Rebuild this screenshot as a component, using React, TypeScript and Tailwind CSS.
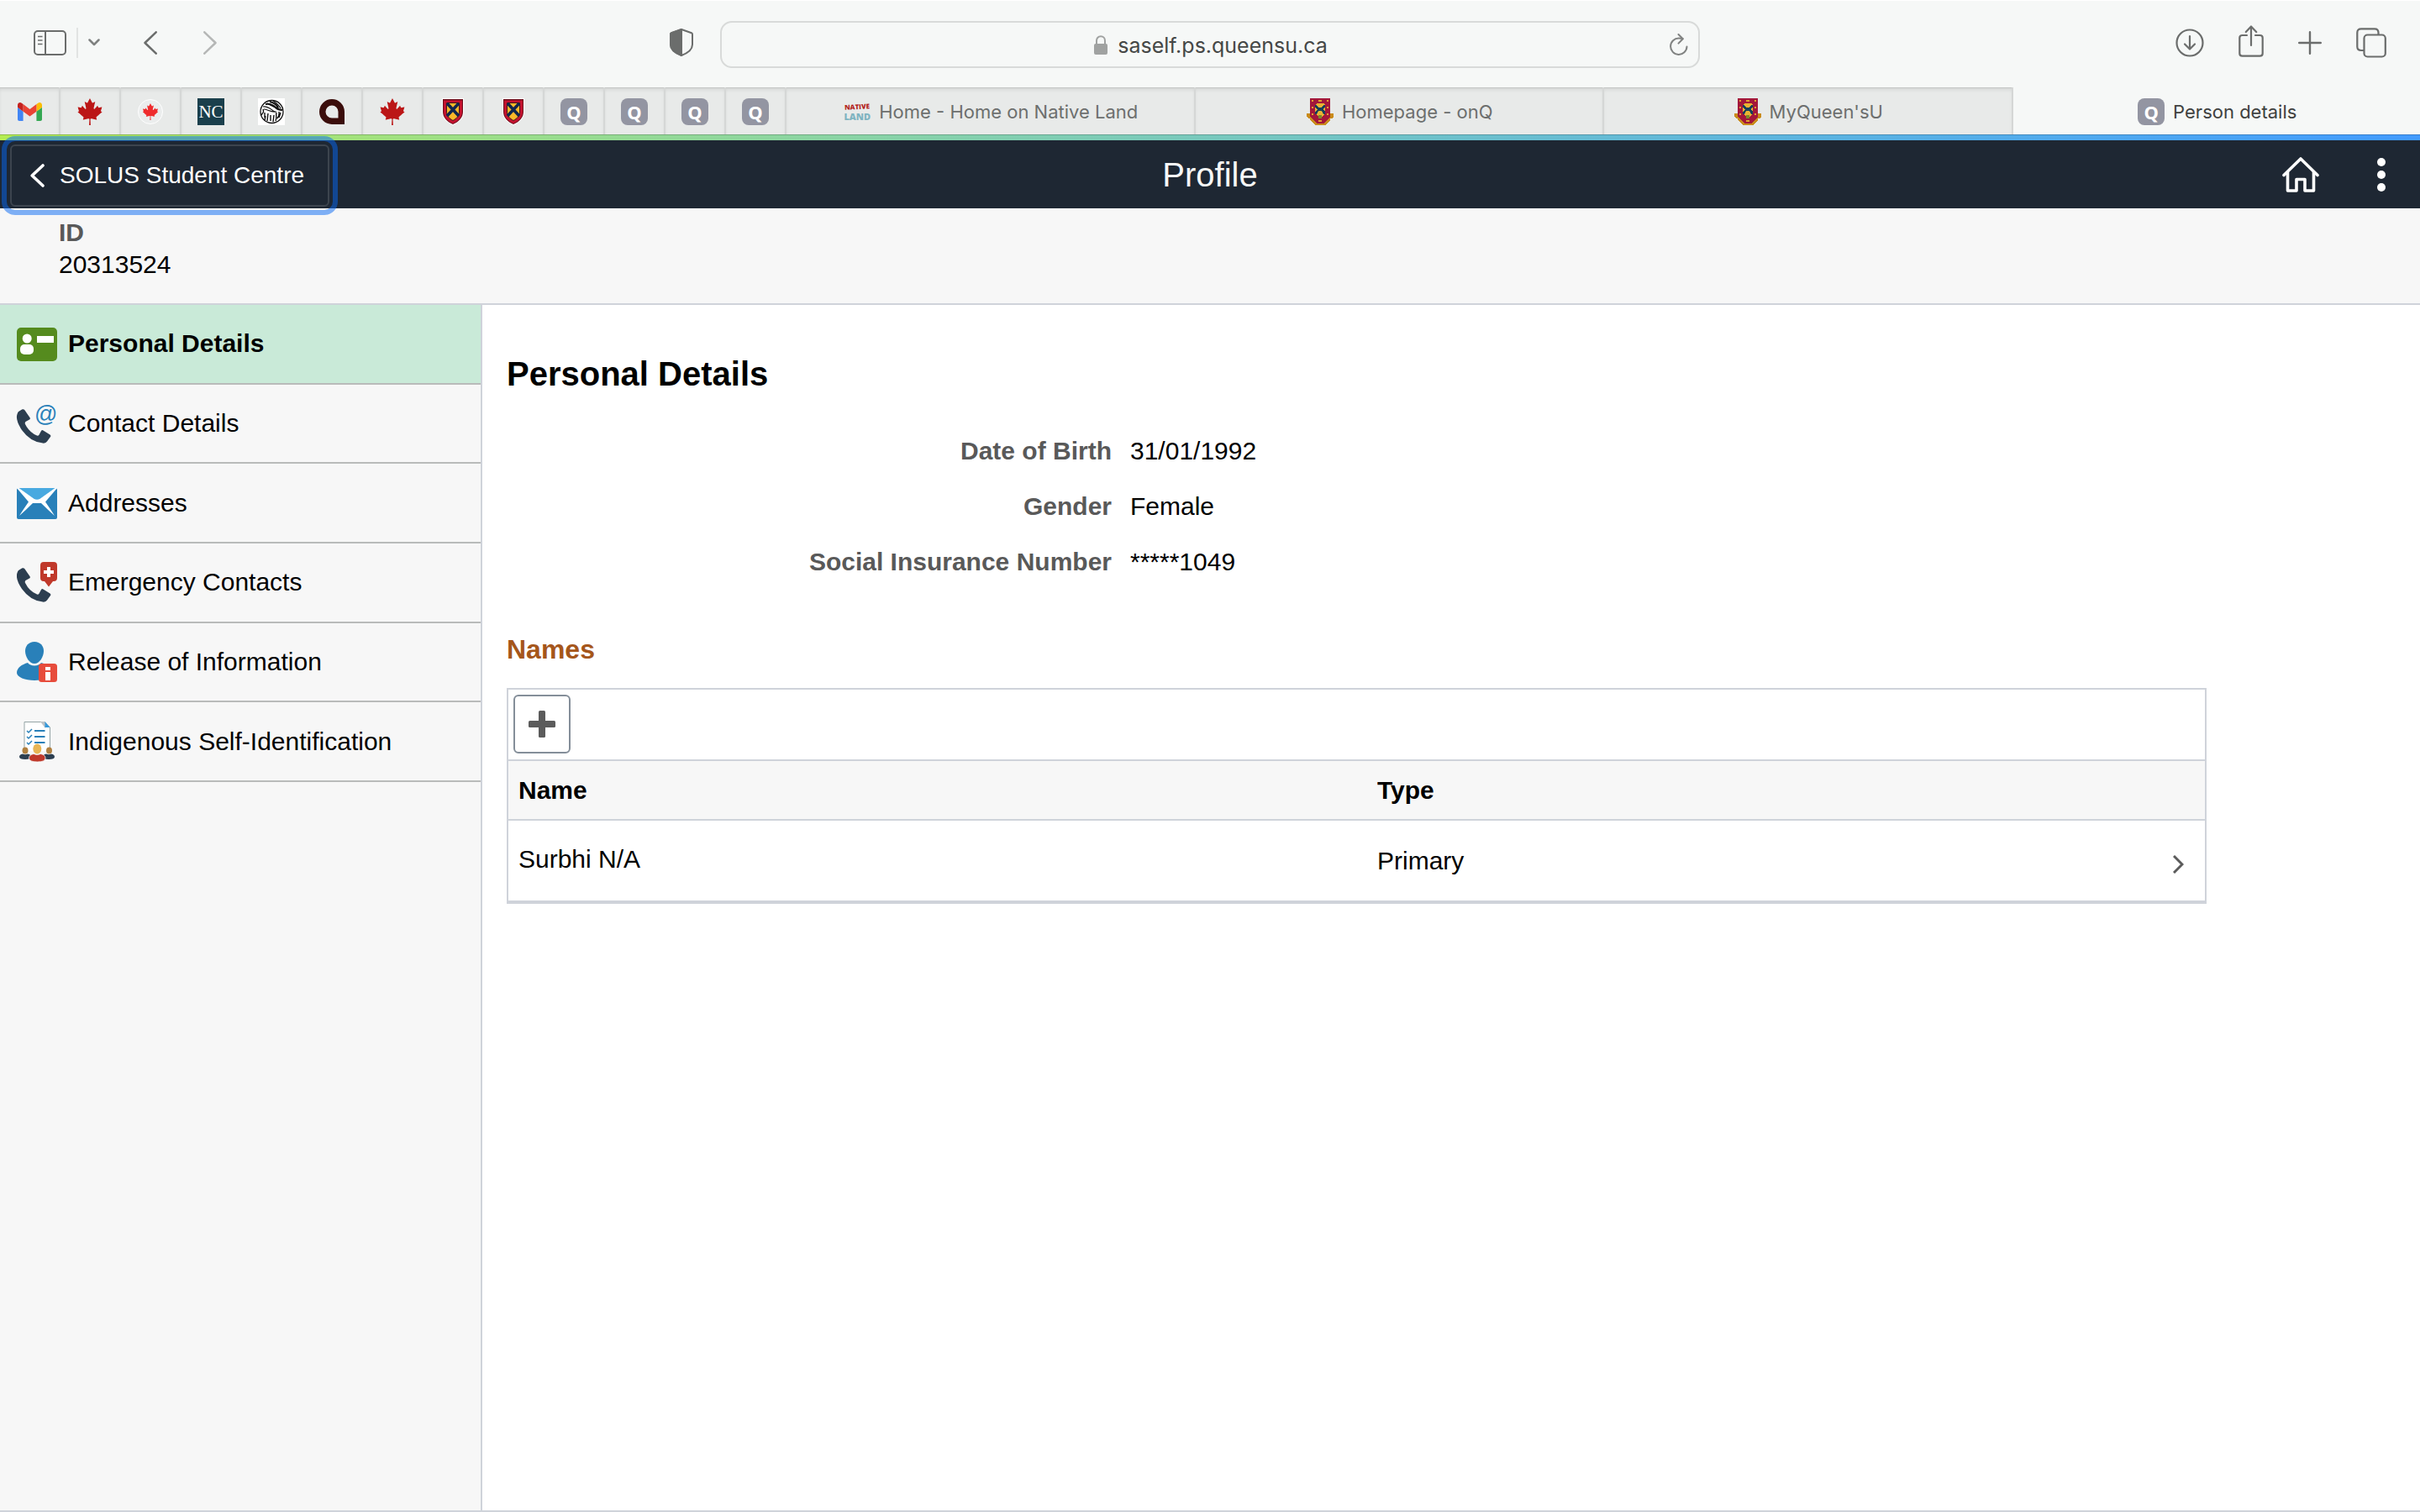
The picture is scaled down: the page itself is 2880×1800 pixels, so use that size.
import type { ReactNode } from "react";
import { FaCanadianMapleLeaf } from "react-icons/fa";

/* ---------- favicons ---------- */

function Gmail() {
  return (
    <svg viewBox="52 42 88 66" className="h-[22px] w-[29px]">
      <path fill="#4285f4" d="M58 108h14V74L52 59v43c0 3.32 2.69 6 6 6" />
      <path fill="#34a853" d="M120 108h14c3.32 0 6-2.69 6-6V59l-20 15" />
      <path fill="#fbbc04" d="M120 48v26l20-15v-8c0-7.42-8.47-11.65-14.4-7.2" />
      <path fill="#ea4335" d="M72 74V48l24 18 24-18v26L96 92" />
      <path fill="#c5221f" d="M52 51v8l20 15V48l-5.6-4.2c-5.94-4.45-14.4-.22-14.4 7.2" />
    </svg>
  );
}

function Leaf() {
  return <FaCanadianMapleLeaf className="size-8 text-[#bb1616]" />;
}

function RoundLeaf() {
  return (
    <span className="flex size-[30px] items-center justify-center rounded-full border border-white bg-[#ebeded]">
      <FaCanadianMapleLeaf className="size-5 text-[#ef2b2d]" />
    </span>
  );
}

function NcMark() {
  return (
    <span className="flex size-8 items-center justify-center bg-[#1a3f4c] font-['Liberation_Serif'] text-[21px] leading-8 text-white">
      NC
    </span>
  );
}

function Sketch() {
  return (
    <svg viewBox="0 0 32 32" className="size-8 bg-white" fill="none" stroke="#111">
      <circle cx="16.500" cy="16" r="13.500" strokeWidth="1.300" />
      <path strokeWidth="2.200" d="M9 7c5-1 9 1 12 4 2 2 5 3 8 3M14 4c4 1 8 3 10 7" />
      <path strokeWidth="1.200" d="M6 10c6-1 9 3 14 6M7 13c4 0 8 4 15 3M11 6c4 2 7 5 14 6M18 3c4 3 7 5 9 9" />
      <path strokeWidth="1.400" d="M4 20c3-4 3-4 2-7M8 17v6M8 26l1-5M12 18l-1 9M15 20v7M19 20l-1 8M22 17c-1 3 1 6-1 10M25 16c0 3 1 4-2 8M27 17l-2 6" />
    </svg>
  );
}

function DropMark() {
  return (
    <svg viewBox="0 0 30 30" className="size-[30px]">
      <path
        fill="#3b0d0b"
        fillRule="evenodd"
        d="M15 0a15 15 0 0 1 15 15v15H15A15 15 0 0 1 15 0zm0 7.500a7.500 7.500 0 0 0 0 15h7.500V15A7.500 7.500 0 0 0 15 7.500z"
      />
    </svg>
  );
}

function Shield() {
  return (
    <svg viewBox="0 0 26 32" className="h-8 w-[26px]">
      <path fill="#fff" d="M0 0h26v16c0 8-6 13-13 16C6 29 0 24 0 16z" />
      <path fill="#6d0f1c" d="M1 1h24v15c0 7-5 12-12 15C6 28 1 23 1 16z" />
      <path fill="#c4122f" d="M2 2.500h22V16c0 6-4 11-11 14C6 27 2 22 2 16z" />
      <path fill="#fbb829" stroke="#3a1a1a" strokeWidth="1" d="M5.500 5.500h15V16c0 5-3 8-7.500 10.500C8.500 24 5.500 21 5.500 16z" />
      <path stroke="#10264c" strokeWidth="3.600" d="M6 6l14 15M20 6L6 21" />
    </svg>
  );
}

function Crest() {
  return (
    <svg viewBox="0 0 32 32" className="size-8" shapeRendering="crispEdges">
      <path fill="#c98b1b" d="M0 18h4v2h24v-2h4v4l-2 2h-2v2l-2 2-2 2-2 2H10l-2-2-2-2-2-2v-2H2l-2-2z" />
      <path fill="#a3173a" d="M4 0h24v22l-2 2-4 4-2 2h-8l-2-2-4-4-2-2z" />
      <path fill="#e9b233" d="M12 6h8l2 2v10l-2 2-2 2h-4l-2-2-2-2V8z" />
      <path fill="#17405a" d="M10 8h2l2 3h4l2-3h2v3l-3 2 3 3v3h-2l-2-4h-4l-2 4h-2v-3l3-3-3-2z" />
      <path fill="#7d8a2a" d="M14 20h4v4h-4z" />
      <path fill="#e0a030" d="M6 2h2v2H6zM14 2h4v2h-4zM24 2h2v2h-2zM6 10h2v2H6zM24 10h2v2h-2zM6 18h2v2H6zM24 18h2v2h-2zM14 26h4v2h-4z" />
    </svg>
  );
}

function QMark() {
  return (
    <span className="flex size-8 items-center justify-center rounded-lg bg-[#9395a2] font-['Noto_Sans'] text-[22px] leading-8 font-bold text-white">
      Q
    </span>
  );
}

function NativeLand() {
  return (
    <span className="flex w-8 flex-col items-center justify-center font-['Open_Sans'] font-extrabold">
      <span className="-rotate-3 text-[8px] leading-3 text-[#b3231c]">NATIVE</span>
      <span className="text-[11px] leading-3 text-[#7fb4c1]">LAND</span>
    </span>
  );
}

/* ---------- side menu icons ---------- */

const phonePath =
  "M2 10L6.500 7.300Q8.500 6.800 9.600 8.500L15.600 17.200Q16.400 18.700 15 19.600L10.500 22Q9.300 23 10 25Q15 35 24 38.500Q25.500 39 26.300 38L29 33Q30 31.500 31.500 32.500L39.500 37.500Q41 38.500 40 40L36 45.500Q34.500 48 31 47.600Q16 46 6 32Q-2 20 .500 13Q1 11 2 10Z";

function CardIcon() {
  return (
    <svg viewBox="0 0 48 48" className="size-12 shrink-0">
      <rect y="5" width="48" height="40" rx="5" fill="#558b1e" />
      <ellipse cx="12.200" cy="18" rx="5.500" ry="5.500" fill="#fff" />
      <rect x="4" y="25" width="16" height="12" rx="5" fill="#fff" />
      <rect x="24" y="15" width="20" height="8" fill="#fff" />
    </svg>
  );
}

function PhoneAtIcon() {
  return (
    <svg viewBox="0 0 48 48" className="size-12 shrink-0 overflow-visible">
      <path fill="#2c3e50" d={phonePath} />
      <text x="21" y="22" fontSize="27" fill="#2980b9" fontFamily="Liberation Sans, sans-serif">
        @
      </text>
    </svg>
  );
}

function MailIcon() {
  return (
    <svg viewBox="0 0 48 48" className="size-12 shrink-0">
      <rect y="6" width="48" height="37" rx="2" fill="#2980b9" />
      <path fill="#fff" d="M0 6h48L34 22.500Q40 31 45 39Q37 32 29 24H19Q11 32 3 39Q8 31 14 22.500Z" />
      <path fill="#48a9e0" d="M2.500 6h43L28 18.500Q24 21 20 18.500Z" />
    </svg>
  );
}

function PhoneAidIcon() {
  return (
    <svg viewBox="0 0 48 48" className="size-12 shrink-0">
      <path fill="#2c3e50" d={phonePath} />
      <path fill="#c0392b" d="M32 0h12q4 0 4 4v15q0 4-4 4h-1l-5 6.500-5-6.500h-1q-4 0-4-4V4q0-4 4-4z" />
      <path fill="#fff" d="M36 6h4v4h4v4h-4v4h-4v-4h-4v-4h4z" />
    </svg>
  );
}

function PersonInfoIcon() {
  return (
    <svg viewBox="0 0 48 48" className="size-12 shrink-0">
      <path fill="#2980b9" d="M21 0c7 0 11 5 11 11 0 7-5 15-11 15S10 18 10 11C10 5 14 0 21 0z" />
      <path fill="#2980b9" d="M13 25c3 4.500 13 4.500 16 0 7 2 12 6 12 12 0 5-9 9-20 9S0 42 0 37c0-6 6-10 13-12z" />
      <rect x="26" y="26" width="22" height="22" rx="3.500" fill="#e74c3c" />
      <path fill="#fff" d="M34 30h6v4h-6zM34 36h6v10h-6z" />
    </svg>
  );
}

function ChecklistPeopleIcon() {
  return (
    <svg viewBox="0 0 48 48" className="size-12 shrink-0">
      <path fill="#fff" stroke="#95a5a6" strokeWidth="1" d="M9 35V.500h24L39.500 7v28" />
      <path fill="#bdc3c7" d="M28 0h6v8z" />
      <path fill="#3498db" d="M33.500 0l6 7h-6z" />
      <g fill="none" stroke="#2980b9" strokeWidth="2">
        <path d="M21 11h12.500M21 18h12.500M21 25h12.500" />
        <path d="M12 11l2 2 4-4M12 18l2 2 4-4M12 25l2 2 4-4" strokeWidth="1.500" />
      </g>
      <ellipse cx="10" cy="34.500" rx="3.500" ry="4" fill="#b08040" />
      <ellipse cx="38.500" cy="34.500" rx="3.500" ry="4" fill="#b08040" />
      <path fill="#2c3e50" d="M3 42q0-3 4-3.500 3 1.500 6 0 4 .500 4 3.500 0 3-7 3-7 0-7-3zM31 42q0-3 4-3.500 3 1.500 6 0 4 .500 4 3.500 0 3-7 3-7 0-7-3z" />
      <path fill="#c0392b" stroke="#f7f7f7" strokeWidth=".8" d="M14.500 43.500q0-4 5.500-5 4 2 8.500 0 5.500 1 5.500 5 0 4.500-9.700 4.500t-9.800-4.500z" />
      <ellipse cx="24.300" cy="32.500" rx="5" ry="6" fill="#e8b555" />
    </svg>
  );
}

/* ---------- browser chrome ---------- */

function ToolButton({ label, children }: { label: string; children: ReactNode }) {
  return (
    <button type="button" aria-label={label} className="flex shrink-0 items-center justify-center">
      {children}
    </button>
  );
}

function Toolbar() {
  return (
    <header className="flex h-26 items-center border-t border-white bg-[#f6f8f7] px-10 pb-1 text-[#6b6d6c]">
      <div className="flex flex-1 items-center pr-8">
        <ToolButton label="Show sidebar">
          <svg viewBox="0 0 39 30" className="h-[30px] w-[39px]" fill="none" stroke="currentColor" strokeWidth="2">
            <rect x="1" y="1" width="37" height="28" rx="4" />
            <path d="M14 1v28" />
            <path d="M5 7.500h5.500M5 12h5.500M5 16.500h5.500" strokeWidth="1.500" />
          </svg>
        </ToolButton>
        <span className="ml-3 h-9 w-[2px] bg-[#e2e4e3]" />
        <div className="ml-3 flex">
          <ToolButton label="Tab groups">
            <svg viewBox="0 0 14 9" className="h-[9px] w-[14px]" fill="none" stroke="#7f8180" strokeWidth="2.500" strokeLinecap="round" strokeLinejoin="round">
              <path d="M1.500 1.500L7 7l5.500-5.500" />
            </svg>
          </ToolButton>
        </div>
        <div className="ml-13 flex gap-[55px]">
          <ToolButton label="Back">
            <svg viewBox="0 0 16 28" className="h-7 w-4" fill="none" stroke="currentColor" strokeWidth="2.500" strokeLinecap="round" strokeLinejoin="round">
              <path d="M14.700 1.300L1.500 14l13.200 12.700" />
            </svg>
          </ToolButton>
          <ToolButton label="Forward">
            <svg viewBox="0 0 16 28" className="h-7 w-4" fill="none" stroke="#b5b7b6" strokeWidth="2.500" strokeLinecap="round" strokeLinejoin="round">
              <path d="M1.300 1.300L14.500 14 1.300 26.700" />
            </svg>
          </ToolButton>
        </div>
        <div className="ml-auto flex">
          <ToolButton label="Privacy report">
            <svg viewBox="0 0 28 33" className="h-[33px] w-7" fill="none" stroke="currentColor" strokeWidth="2" strokeLinejoin="round">
              <path d="M14 1l12 4.300q1 .400 1 1.500V19c0 6-5 10-13 13C6 29 1 25 1 19V6.800Q1 5.700 2 5.300z" />
              <path fill="currentColor" d="M14 1v31C6 29 1 25 1 19V6.800Q1 5.700 2 5.300z" />
            </svg>
          </ToolButton>
        </div>
      </div>
      <div className="mt-1 flex h-14 w-[1166px] items-center rounded-[14px] border-2 border-[#d8dad9] pr-3">
        <div className="flex flex-1 items-center justify-center gap-3 pt-[2px] pl-9">
          <svg viewBox="0 0 16 23" className="h-[23px] w-4" fill="none" stroke="#a0a2a1" strokeWidth="2">
            <path d="M3 11V6.500C3 3.500 5 1.300 8 1.300s5 2.200 5 5.200V11" />
            <rect y="10" width="16" height="13" rx="2" fill="#a0a2a1" stroke="none" />
          </svg>
          <input
            aria-label="Address"
            defaultValue="saself.ps.queensu.ca"
            className="field-sizing-content bg-transparent text-[25px] leading-8 text-[#454746] outline-none"
          />
        </div>
        <ToolButton label="Reload page">
          <svg viewBox="0 0 22 26" className="h-[26px] w-[22px]" fill="none" stroke="#808281" strokeWidth="2" strokeLinecap="round" strokeLinejoin="round">
            <path d="M20.500 15.500A9.700 9.700 0 1 1 11 5.500c1.800 0 3 .2 4.500.6" />
            <path d="M10.500 1l5.300 5.300-5.300 5.300" />
          </svg>
        </ToolButton>
      </div>
      <div className="flex flex-1 items-center justify-end gap-[41px] pl-8">
        <ToolButton label="Downloads">
          <svg viewBox="0 0 34 34" className="size-[34px]" fill="none" stroke="currentColor" strokeWidth="2.200" strokeLinecap="round" strokeLinejoin="round">
            <circle cx="17" cy="17" r="15.500" />
            <path d="M17 9v15M11 18.500l6 6 6-6" />
          </svg>
        </ToolButton>
        <ToolButton label="Share">
          <svg viewBox="0 0 30 38" className="mb-1 h-[38px] w-[30px]" fill="none" stroke="currentColor" strokeWidth="2.200" strokeLinecap="round" strokeLinejoin="round">
            <path d="M10 12H4.500Q1.300 12 1.300 15v18.500q0 3.200 3.200 3.200h21q3.200 0 3.200-3.200V15q0-3-3.200-3H20" />
            <path d="M15 24V2M8.800 8L15 1.500 21.200 8" />
          </svg>
        </ToolButton>
        <ToolButton label="New tab">
          <svg viewBox="0 0 28 28" className="size-7" fill="none" stroke="currentColor" strokeWidth="2.400" strokeLinecap="round">
            <path d="M14 1.200v25.600M1.200 14h25.600" />
          </svg>
        </ToolButton>
        <ToolButton label="Tab overview">
          <svg viewBox="0 0 36 36" className="size-9" fill="none" stroke="currentColor" strokeWidth="2.200">
            <rect x="9.500" y="8.500" width="25.300" height="26" rx="4" />
            <path d="M9.500 27H6q-4.700 0-4.700-4.500V6Q1.300 1.300 6 1.300h16q4.500 0 4.500 4.500v2.500" />
          </svg>
        </ToolButton>
      </div>
    </header>
  );
}

const pins: { name: string; icon: ReactNode }[] = [
  { name: "Gmail", icon: <Gmail /> },
  { name: "Canada", icon: <Leaf /> },
  { name: "Immigration", icon: <RoundLeaf /> },
  { name: "NC", icon: <NcMark /> },
  { name: "Archive", icon: <Sketch /> },
  { name: "Workspace", icon: <DropMark /> },
  { name: "Canada services", icon: <Leaf /> },
  { name: "University", icon: <Shield /> },
  { name: "Graduate studies", icon: <Shield /> },
  { name: "Pinned 1", icon: <QMark /> },
  { name: "Pinned 2", icon: <QMark /> },
  { name: "Pinned 3", icon: <QMark /> },
  { name: "Pinned 4", icon: <QMark /> },
];

const tabs: { title: string; icon: ReactNode; active?: boolean }[] = [
  { title: "Home - Home on Native Land", icon: <NativeLand /> },
  { title: "Homepage - onQ", icon: <Crest /> },
  { title: "MyQueen'sU", icon: <Crest /> },
  { title: "Person details", icon: <QMark />, active: true },
];

function TabBar() {
  return (
    <nav aria-label="Tabs" className="flex h-14">
      {pins.map((pin) => (
        <button
          key={pin.name}
          type="button"
          aria-label={pin.name}
          className="flex w-18 shrink-0 items-center justify-center border-r-2 border-[#d5d7d6] bg-[#e8eae9] pt-[2px] shadow-[inset_0_1px_0_#c4c6c5,inset_0_4px_5px_-2px_rgba(0,0,0,0.12)]"
        >
          {pin.icon}
        </button>
      ))}
      {tabs.map((tab) => (
        <button
          key={tab.title}
          type="button"
          className={
            tab.active
              ? "flex flex-1 items-center justify-center gap-[10px] bg-[#f6f8f7] pt-[2px] pl-[2px] text-[22px] leading-7 text-[#3f4140]"
              : "flex flex-1 items-center justify-center gap-[10px] border-r-2 border-[#d5d7d6] bg-[#e8eae9] pt-[2px] pl-[2px] text-[22px] leading-7 text-[#6d6f6e] shadow-[inset_0_1px_0_#c4c6c5,inset_0_4px_5px_-2px_rgba(0,0,0,0.12)]"
          }
        >
          {tab.icon}
          <span>{tab.title}</span>
        </button>
      ))}
    </nav>
  );
}

/* ---------- page ---------- */

function PageHeader() {
  return (
    <div className="relative z-10 border-t border-black/20 bg-linear-to-r from-[#b4ec51] to-[#429bff] bg-origin-border pt-[6px]">
      <div className="grid h-[81px] grid-cols-[1fr_auto_1fr] items-center bg-[#1e2733] text-white">
        <div className="flex pt-[3px] pl-3">
          <button
            type="button"
            className="flex h-[74px] items-center gap-[18px] rounded-[6px] border-2 border-[#3c444e] pr-7 pl-[22px] text-[28px] leading-8 outline-6 outline-offset-4 outline-[#0567f4]/50"
          >
            <svg viewBox="0 0 17 28" className="h-7 w-[17px]" fill="none" stroke="currentColor" strokeWidth="3.600" strokeLinecap="round" strokeLinejoin="round">
              <path d="M15 2L2.200 14 15 26" />
            </svg>
            SOLUS Student Centre
          </button>
        </div>
        <h1 className="text-[40px] leading-12 text-[#f7f7f7]">Profile</h1>
        <div className="flex items-center justify-end gap-[69px] pr-[41px]">
          <ToolButton label="Home">
            <svg viewBox="0 0 44 42" className="h-[42px] w-11" fill="none" stroke="currentColor" strokeWidth="3.600" strokeLinejoin="round" strokeLinecap="round">
              <path d="M2 21.500L22 2l20 19.500" />
              <path d="M6.500 18v22h10.500V26.500h10V40h10.500V18" />
            </svg>
          </ToolButton>
          <ToolButton label="Actions">
            <svg viewBox="0 0 10 42" className="h-[42px] w-[10px]" fill="currentColor">
              <circle cx="5" cy="6" r="5" />
              <circle cx="5" cy="21" r="5" />
              <circle cx="5" cy="36" r="5" />
            </svg>
          </ToolButton>
        </div>
      </div>
    </div>
  );
}

const menu: { label: string; icon: ReactNode; active?: boolean }[] = [
  { label: "Personal Details", icon: <CardIcon />, active: true },
  { label: "Contact Details", icon: <PhoneAtIcon /> },
  { label: "Addresses", icon: <MailIcon /> },
  { label: "Emergency Contacts", icon: <PhoneAidIcon /> },
  { label: "Release of Information", icon: <PersonInfoIcon /> },
  { label: "Indigenous Self-Identification", icon: <ChecklistPeopleIcon /> },
];

const details = [
  ["Date of Birth", "31/01/1992"],
  ["Gender", "Female"],
  ["Social Insurance Number", "*****1049"],
];

function SideMenu() {
  return (
    <nav aria-label="Profile sections" className="w-[574px] shrink-0 border-r-2 border-[#cfd3da] bg-[#f7f7f7]">
      <ul className="grid h-[568px] grid-rows-6">
        {menu.map((item) => (
          <li key={item.label} className="border-b-2 border-[#b9bbba]">
            <a
              href="#"
              aria-current={item.active ? "page" : undefined}
              className={
                item.active
                  ? "flex h-full items-center gap-[13px] bg-[#c9ead8] pl-5 font-bold"
                  : "flex h-full items-center gap-[13px] pl-5"
              }
            >
              {item.icon}
              {item.label}
            </a>
          </li>
        ))}
      </ul>
    </nav>
  );
}

function NamesTable() {
  return (
    <div className="mt-[26px] mr-[254px] border-2 border-b-4 border-[#cfd3da]">
      <div className="flex h-[83px] items-start p-[6px]">
        <button
          type="button"
          aria-label="Add name"
          className="flex h-[70px] w-[68px] items-center justify-center rounded-[6px] border-2 border-[#848e99] bg-white"
        >
          <svg viewBox="0 0 32 32" className="size-8" fill="#5b5b5b">
            <rect x="12" width="8" height="32" rx="1.500" />
            <rect y="12" width="32" height="8" rx="1.500" />
          </svg>
        </button>
      </div>
      <table className="w-full table-fixed text-left">
        <thead>
          <tr className="h-[71px] border-y-2 border-[#cfd3da] bg-[#f7f7f7]">
            <th scope="col" className="w-[1022px] pl-3">Name</th>
            <th scope="col" className="pl-3">Type</th>
            <th scope="col" className="w-20" aria-label="Open" />
          </tr>
        </thead>
        <tbody>
          <tr className="h-[96px]">
            <td className="pb-1 pl-3">Surbhi N/A</td>
            <td className="pl-3">Primary</td>
            <td className="pt-2 pr-[25px]">
              <button type="button" aria-label="Open Surbhi N/A" className="ml-auto block">
                <svg viewBox="0 0 13 22" className="h-[22px] w-[13px]" fill="none" stroke="#5b5b5b" strokeWidth="3">
                  <path d="M1 1l10 10L1 21" />
                </svg>
              </button>
            </td>
          </tr>
        </tbody>
      </table>
    </div>
  );
}

export default function App() {
  return (
    <div className="flex min-h-screen flex-col border-b-2 border-[#cfd3da] bg-white font-['Liberation_Sans',sans-serif] text-[30px] leading-[38px] text-black">
      <div className="font-['Inter',sans-serif]">
        <Toolbar />
        <TabBar />
      </div>
      <PageHeader />
      <section aria-label="Student" className="h-[115px] border-b-2 border-[#cfd3da] bg-[#f7f7f7] pt-[10px] pl-[70px]">
        <p className="font-bold text-[#595959]">ID</p>
        <p>20313524</p>
      </section>
      <div className="flex flex-1">
        <SideMenu />
        <main className="flex-1 pt-[58px] pl-[29px]">
          <h2 className="text-[40px] leading-12 font-bold">Personal Details</h2>
          <dl className="mt-[35px]">
            {details.map(([label, value]) => (
              <div key={label} className="grid grid-cols-[720px_1fr] gap-[22px] leading-[66px]">
                <dt className="text-right font-bold text-[#595959]">{label}</dt>
                <dd>{value}</dd>
              </div>
            ))}
          </dl>
          <h3 className="mt-[51px] text-[32px] leading-10 font-bold text-[#a5561b]">Names</h3>
          <NamesTable />
        </main>
      </div>
    </div>
  );
}
